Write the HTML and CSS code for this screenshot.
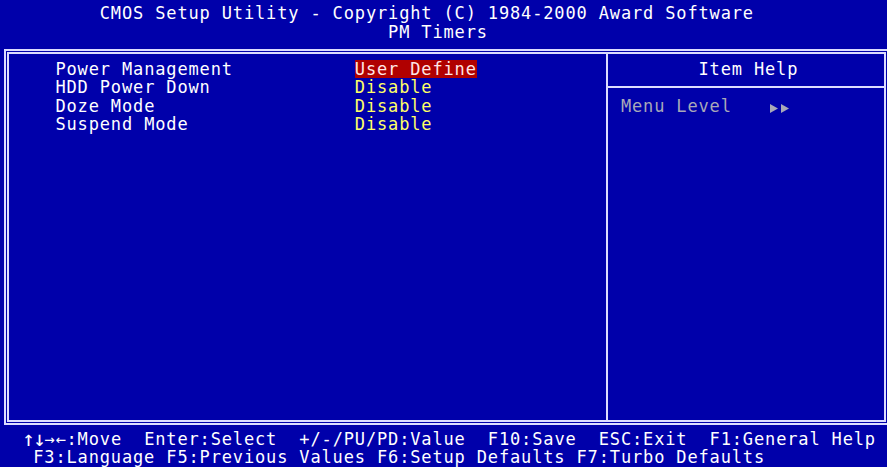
FILE: index.html
```html
<!DOCTYPE html>
<html lang="en">
<head>
<meta charset="utf-8">
<title>CMOS Setup Utility - PM Timers</title>
<link rel="stylesheet" href="styles.css">
</head>
<body>
<div class="screen">
  <header class="title">
    <div class="line t1">CMOS Setup Utility - Copyright (C) 1984-2000 Award Software</div>
    <div class="line t2">PM Timers</div>
  </header>
  <main class="box">
    <section class="settings">
      <div class="row"><span class="label">Power Management</span><span class="value selected">User Define</span></div>
      <div class="row"><span class="label">HDD Power Down</span><span class="value">Disable</span></div>
      <div class="row"><span class="label">Doze Mode</span><span class="value">Disable</span></div>
      <div class="row"><span class="label">Suspend Mode</span><span class="value">Disable</span></div>
    </section>
    <aside class="help">
      <div class="help-head">Item Help</div>
      <div class="help-body"><span class="dim">Menu Level</span><svg class="arrows" width="22" height="9" viewBox="0 0 22 9"><polygon points="0,0 8,4.5 0,9"/><polygon points="11,0 19,4.5 11,9"/></svg></div>
    </aside>
  </main>
  <footer class="keys">
    <div class="line k1"><span class="keyarrows">↑↓</span>→←:Move  Enter:Select  +/-/PU/PD:Value  F10:Save  ESC:Exit  F1:General Help</div>
    <div class="line k2">F3:Language F5:Previous Values F6:Setup Defaults F7:Turbo Defaults</div>
  </footer>
</div>
</body>
</html>
```

FILE: styles.css
```css
:root {
  --cw: 11.0875px;
  --lh: 18.5px;
  --blue: #0000aa;
  --line: #dcdcff;
}

html, body {
  margin: 0;
  padding: 0;
  background: var(--blue);
}

.screen {
  width: 887px;
  height: 467px;
  overflow: hidden;
  box-sizing: border-box;
  padding-top: 4px;
  background: var(--blue);
  color: #ffffff;
  font-family: "DejaVu Sans Mono", monospace;
  font-size: 17px;
  letter-spacing: 0.8526px;
  line-height: var(--lh);
}

.line,
.label,
.value,
.help-head,
.dim {
  white-space: pre;
}

.line {
  height: var(--lh);
}

.t1 { padding-left: calc(9 * var(--cw)); }
.t2 { padding-left: calc(35 * var(--cw)); }

.box {
  display: flex;
  box-sizing: border-box;
  width: 885px;
  height: 376px;
  margin: 8px 0 0 4px;
  border: 5px double var(--line);
}

.settings {
  width: 597px;
  flex: none;
  box-sizing: border-box;
  padding-top: 5.5px;
  padding-left: calc(5 * var(--cw) - 9px);
}

.row {
  display: grid;
  grid-template-columns: calc(27 * var(--cw)) auto;
  justify-items: start;
  height: var(--lh);
}

.value {
  color: #ffff66;
}

.value.selected {
  background: #b00000;
  color: #ffe6e6;
}

.help {
  flex: 1;
  border-left: 2px solid var(--line);
}

.help-head {
  height: var(--lh);
  padding: 5.5px 0 8px calc(63 * var(--cw) - 608px);
  border-bottom: 2px solid var(--line);
}

.help-body {
  height: var(--lh);
  padding: 8.5px 0 0 calc(56 * var(--cw) - 608px);
  color: #a8a8b8;
}

.arrows {
  margin-left: calc(3 * var(--cw) + 5px);
  fill: #a8a8b8;
  vertical-align: -1px;
}

.keys {
  margin-top: 4.5px;
}

.keyarrows {
  font-size: 21px;
  letter-spacing: calc(var(--cw) - 21px * 0.60205);
  line-height: var(--lh);
  vertical-align: top;
}

.k1 { padding-left: calc(2 * var(--cw)); }
.k2 { padding-left: calc(3 * var(--cw)); }
```
